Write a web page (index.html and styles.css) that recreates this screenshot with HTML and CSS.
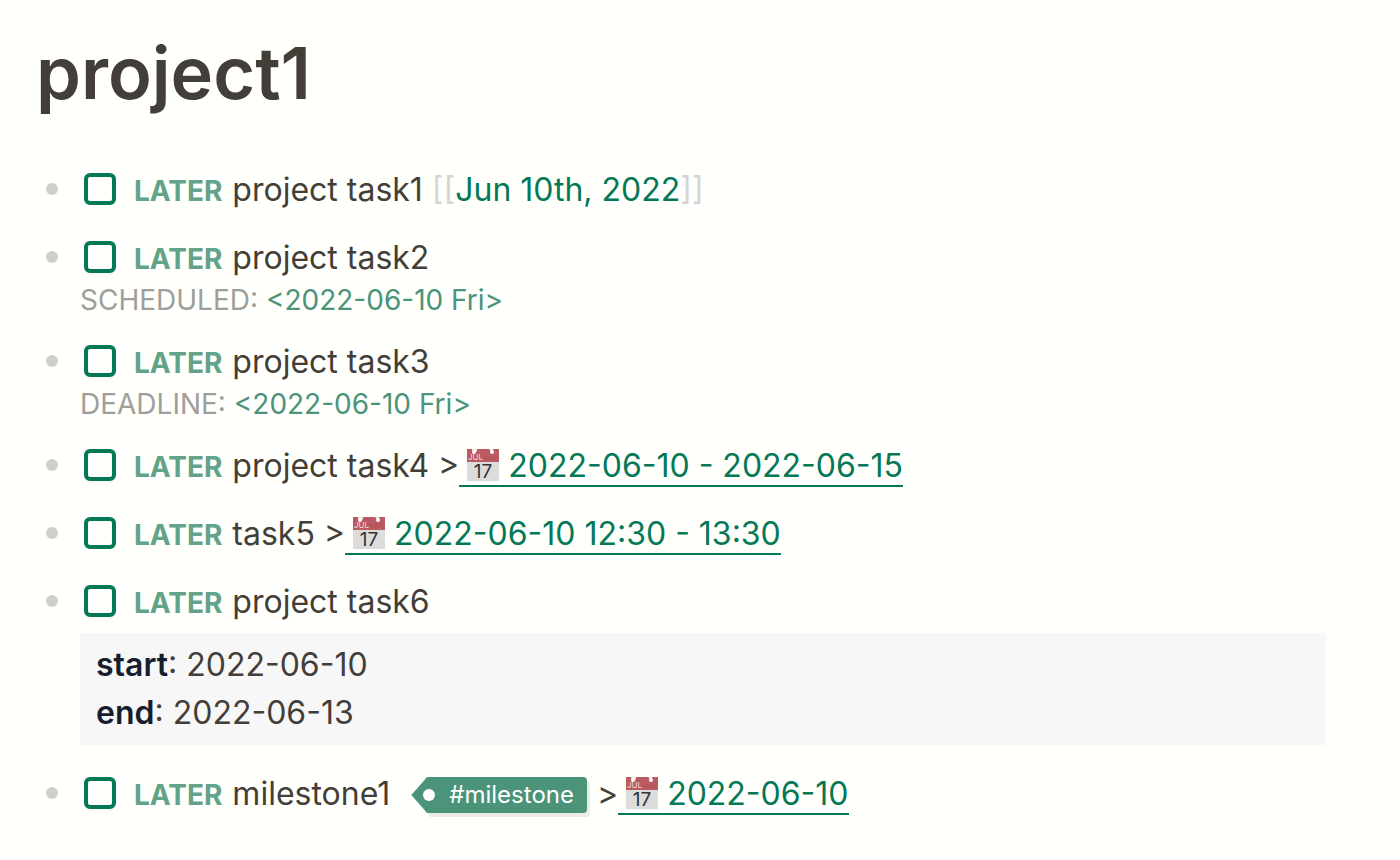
FILE: index.html
```
<!DOCTYPE html>
<html lang="en">
<head>
<meta charset="utf-8">
<meta name="viewport" content="width=device-width, initial-scale=1">
<title>project1</title>
<link rel="stylesheet" href="styles.css">
</head>
<body>
<main class="page">
  <h1 class="title">project1</h1>
  <ul class="blocks">
    <li class="block">
      <span class="bullet"></span>
      <div class="content">
        <div class="line"><input type="checkbox" class="check" id="t1"><label for="t1" class="marker">LATER</label><span class="text">project task1 <span class="bracket">[[</span><a href="#" class="ref">Jun 10th, 2022</a><span class="bracket">]]</span></span></div>
      </div>
    </li>
    <li class="block">
      <span class="bullet"></span>
      <div class="content">
        <div class="line"><input type="checkbox" class="check" id="t2"><label for="t2" class="marker">LATER</label><span class="text">project task2</span></div>
        <div class="stamp">SCHEDULED: <a href="#" class="stamp-date">&lt;2022-06-10 Fri&gt;</a></div>
      </div>
    </li>
    <li class="block">
      <span class="bullet"></span>
      <div class="content">
        <div class="line"><input type="checkbox" class="check" id="t3"><label for="t3" class="marker">LATER</label><span class="text">project task3</span></div>
        <div class="stamp">DEADLINE: <a href="#" class="stamp-date">&lt;2022-06-10 Fri&gt;</a></div>
      </div>
    </li>
    <li class="block">
      <span class="bullet"></span>
      <div class="content">
        <div class="line"><input type="checkbox" class="check" id="t4"><label for="t4" class="marker">LATER</label><span class="text">project task4 &gt;</span><a href="#" class="date"><svg class="cal" viewBox="0 0 32 32">
          <rect width="32" height="32" fill="#dcdcdc"/>
          <rect width="32" height="13" fill="#bb5a60"/>
          <path d="M5 0h5v2l-2 2H6zM22 0h4v2h-2z" fill="#f6e9e8"/>
          <circle cx="7" cy="3" r="2" fill="#fff"/>
          <circle cx="25" cy="3" r="2" fill="#fff"/>
          <path d="M17 8h13M18 10h12" stroke="#b14f55" stroke-dasharray="2 1"/>
          <text x="1" y="11" class="cal-month">JUL</text>
          <text x="16" y="29" text-anchor="middle" class="cal-day">17</text>
        </svg>2022-06-10 - 2022-06-15</a></div>
      </div>
    </li>
    <li class="block">
      <span class="bullet"></span>
      <div class="content">
        <div class="line"><input type="checkbox" class="check" id="t5"><label for="t5" class="marker">LATER</label><span class="text">task5 &gt;</span><a href="#" class="date"><svg class="cal" viewBox="0 0 32 32">
          <rect width="32" height="32" fill="#dcdcdc"/>
          <rect width="32" height="13" fill="#bb5a60"/>
          <path d="M5 0h5v2l-2 2H6zM22 0h4v2h-2z" fill="#f6e9e8"/>
          <circle cx="7" cy="3" r="2" fill="#fff"/>
          <circle cx="25" cy="3" r="2" fill="#fff"/>
          <path d="M17 8h13M18 10h12" stroke="#b14f55" stroke-dasharray="2 1"/>
          <text x="1" y="11" class="cal-month">JUL</text>
          <text x="16" y="29" text-anchor="middle" class="cal-day">17</text>
        </svg>2022-06-10 12:30 - 13:30</a></div>
      </div>
    </li>
    <li class="block">
      <span class="bullet"></span>
      <div class="content">
        <div class="line"><input type="checkbox" class="check" id="t6"><label for="t6" class="marker">LATER</label><span class="text">project task6</span></div>
        <div class="props">
          <div><span class="key">start</span>: 2022-06-10</div>
          <div><span class="key">end</span>: 2022-06-13</div>
        </div>
      </div>
    </li>
    <li class="block">
      <span class="bullet"></span>
      <div class="content">
        <div class="line"><input type="checkbox" class="check" id="t7"><label for="t7" class="marker">LATER</label><span class="text">milestone1</span><a href="#" class="tag">#milestone</a><span>&gt;</span><a href="#" class="date"><svg class="cal" viewBox="0 0 32 32">
          <rect width="32" height="32" fill="#dcdcdc"/>
          <rect width="32" height="13" fill="#bb5a60"/>
          <path d="M5 0h5v2l-2 2H6zM22 0h4v2h-2z" fill="#f6e9e8"/>
          <circle cx="7" cy="3" r="2" fill="#fff"/>
          <circle cx="25" cy="3" r="2" fill="#fff"/>
          <path d="M17 8h13M18 10h12" stroke="#b14f55" stroke-dasharray="2 1"/>
          <text x="1" y="11" class="cal-month">JUL</text>
          <text x="16" y="29" text-anchor="middle" class="cal-day">17</text>
        </svg>2022-06-10</a></div>
      </div>
    </li>
  </ul>
</main>
</body>
</html>
```
FILE: styles.css
```
* { box-sizing: border-box; }
body {
  margin: 0;
  background: #fffffc;
  color: #433f38;
  font: 32px/48px Inter, "Liberation Sans", sans-serif;
}
a { color: #047857; text-decoration: none; }
.page { padding: 29px 74px 24px 36px; }
.title {
  margin: 0 0 49px;
  font-size: 72px;
  line-height: 88px;
  font-weight: 600;
}
.blocks {
  margin: 0;
  padding: 0;
  list-style: none;
  display: flex;
  flex-direction: column;
  gap: 20px;
}
.block { display: flex; }
.bullet {
  flex: none;
  width: 12px;
  height: 12px;
  margin: 17px 22px 0 10px;
  border-radius: 50%;
  background: #cfcecb;
}
.content { flex: 1; min-width: 0; }
.line { display: flex; align-items: baseline; white-space: nowrap; }
.check {
  appearance: none;
  flex: none;
  align-self: flex-start;
  width: 32px;
  height: 32px;
  margin: 7px 18px 0 4px;
  border: 4px solid #047857;
  border-radius: 6px;
  background: #fffffc;
}
.check:checked { background: #047857; }
.marker {
  margin-right: 10px;
  color: #63a389;
  font-size: 28px;
  line-height: 40px;
  font-weight: 700;
}
.bracket { color: #d4d4d2; }
.stamp {
  color: #a09e9a;
  font-size: 28px;
  line-height: 36px;
}
.stamp-date { color: #4b9379; }
.date {
  height: 45px;
  padding-left: 8px;
  border-bottom: 2px solid #047857;
}
.cal {
  width: 32px;
  height: 32px;
  margin-right: 9px;
  vertical-align: -4px;
  overflow: visible;
}
.cal-month { font: 8px Inter, sans-serif; fill: #f0dcdc; }
.cal-day { font: 19px Inter, sans-serif; fill: #333; }
.props {
  margin: 7px 0 5px;
  padding: 8px 16px;
  background: #f7f7f8;
}
.key { color: #161e2e; font-weight: 600; }
.tag {
  position: relative;
  align-self: flex-start;
  height: 36px;
  margin: 7px 10px 0 35px;
  padding: 0 13px 0 24px;
  border-radius: 4px;
  background: #4b9379;
  box-shadow: 3px 4px 0 #ebebe8;
  color: #fff;
  font-size: 24px;
  line-height: 36px;
}
.tag::before {
  content: "";
  position: absolute;
  top: 0;
  left: -14px;
  width: 16px;
  height: 36px;
  background: #4b9379;
  clip-path: polygon(100% 0, 0 50%, 100% 100%);
}
.tag::after {
  content: "";
  position: absolute;
  top: 12px;
  left: -2px;
  width: 12px;
  height: 12px;
  border-radius: 50%;
  background: #fff;
}
```
